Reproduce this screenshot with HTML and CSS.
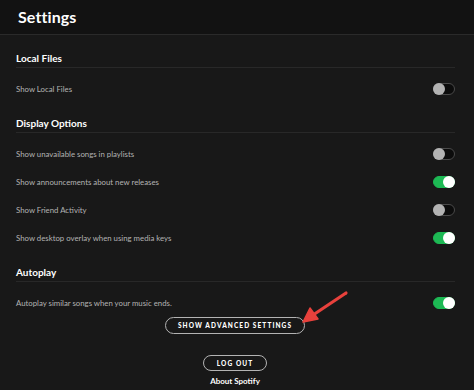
FILE: index.html
```html
<!DOCTYPE html>
<html>
<head>
<meta charset="utf-8">
<link rel="stylesheet" href="styles.css">
</head>
<body>
<div class="page">
  <header class="topbar"><h1 class="title">Settings</h1></header>
  <main class="content">
    <section class="section">
      <h2 class="section-title">Local Files</h2>
      <div class="row"><span class="label">Show Local Files</span><span class="toggle"></span></div>
    </section>
    <section class="section">
      <h2 class="section-title">Display Options</h2>
      <div class="row"><span class="label">Show unavailable songs in playlists</span><span class="toggle"></span></div>
      <div class="row"><span class="label">Show announcements about new releases</span><span class="toggle on"></span></div>
      <div class="row"><span class="label">Show Friend Activity</span><span class="toggle"></span></div>
      <div class="row"><span class="label">Show desktop overlay when using media keys</span><span class="toggle on"></span></div>
    </section>
    <section class="section">
      <h2 class="section-title">Autoplay</h2>
      <div class="row"><span class="label">Autoplay similar songs when your music ends.</span><span class="toggle on"></span></div>
    </section>
    <div class="actions">
      <button class="pill pill-wide">SHOW ADVANCED SETTINGS</button>
      <button class="pill pill-small">LOG OUT</button>
      <a class="about">About Spotify</a>
    </div>
  </main>
  <svg class="arrow" width="474" height="390" viewBox="0 0 474 390">
    <line x1="346" y1="293" x2="313" y2="315" stroke="#e8413c" stroke-width="3.2" stroke-linecap="round"/>
    <polygon points="303,322 310,308 318,319" fill="#e8413c" stroke="#e8413c" stroke-width="1.5" stroke-linejoin="round"/>
  </svg>
</div>
</body>
</html>
```
FILE: styles.css
```css
* { box-sizing: border-box; }
html, body { margin: 0; padding: 0; }
body {
  background: #181818;
  font-family: Lato, "Noto Sans", sans-serif;
  color: #fff;
  width: 474px;
  height: 390px;
  overflow: hidden;
}
.page { position: relative; width: 474px; height: 390px; }
.topbar {
  height: 35px;
  background: #121212;
  border-bottom: 1px solid #2a2a2a;
  display: flex;
  align-items: center;
  padding-left: 18px;
}
.title {
  margin: 0;
  font-size: 16px;
  font-weight: 700;
  letter-spacing: 0.1px;
  line-height: 1;
  padding-bottom: 1px;
}
.content { padding: 0 19px 0 16px; }
.section-title {
  margin: 0;
  font-size: 10px;
  font-weight: 700;
  line-height: 13px;
  padding-top: 14px;
  padding-bottom: 2px;
  border-bottom: 1px solid #282828;
  margin-bottom: 7px;
}
.section:first-child .section-title { padding-top: 17px; }
.row {
  height: 28px;
  display: flex;
  align-items: center;
  justify-content: space-between;
}
.label {
  font-size: 7.8px;
  color: #b3b3b3;
}
.toggle {
  position: relative;
  width: 22px;
  height: 12px;
  border-radius: 6px;
  background: #0c0c0c;
  border: 1px solid #4a4a4a;
}
.toggle::after {
  content: "";
  position: absolute;
  top: -1px;
  left: -1px;
  width: 12px;
  height: 12px;
  border-radius: 50%;
  background: #b3b3b3;
}
.toggle.on {
  background: #1db954;
  border-color: #1db954;
}
.toggle.on::after {
  left: auto;
  right: -1px;
  background: #fff;
}
.actions {
  display: flex;
  flex-direction: column;
  align-items: center;
  padding-right: 1px;
}
.pill {
  font-family: Lato, "Noto Sans", sans-serif;
  background: transparent;
  color: #fff;
  border: 1px solid #b3b3b3;
  border-radius: 999px;
  font-weight: 900;
  letter-spacing: 1.1px;
  padding: 0;
  display: flex;
  align-items: center;
  justify-content: center;
}
.pill-wide {
  width: 140px;
  height: 17px;
  font-size: 6.5px;
}
.pill-small {
  margin-top: 21px;
  width: 64px;
  height: 16px;
  font-size: 6.5px;
}
.about {
  margin-top: 3px;
  font-size: 8px;
  font-weight: 700;
  color: #fff;
  line-height: 14px;
}
.arrow {
  position: absolute;
  left: 0;
  top: 0;
  pointer-events: none;
}
```
